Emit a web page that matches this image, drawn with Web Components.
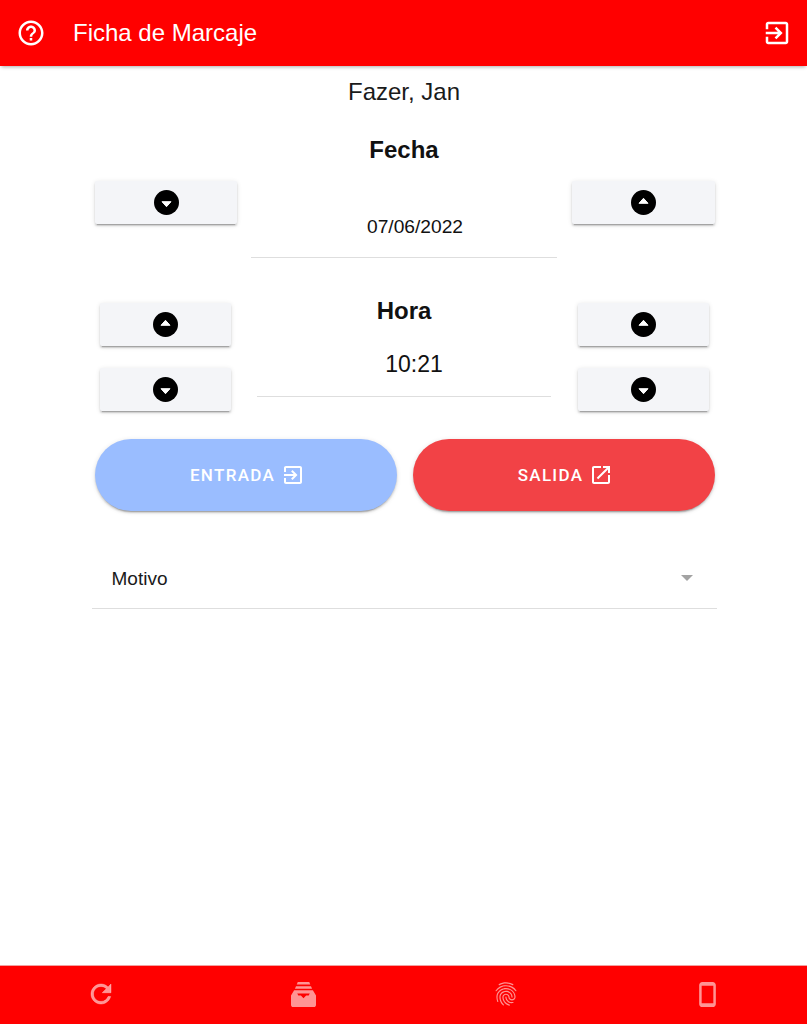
<!DOCTYPE html>
<html lang="es">
<head>
<meta charset="utf-8">
<title>Ficha de Marcaje</title>
<style>
    html, body { margin: 0; height: 100%; background: #fff; }
    body { font-family: "Liberation Sans", Arial, sans-serif; color: #111; }
</style>
</head>
<body>
<app-ficha></app-ficha>
<script>
const iconos = {
    ayuda: '<path d="M11 18h2v-2h-2v2zm1-16C6.48 2 2 6.48 2 12s4.48 10 10 10 10-4.48 10-10S17.52 2 12 2zm0 18c-4.41 0-8-3.59-8-8s3.59-8 8-8 8 3.59 8 8-3.59 8-8 8zm0-14c-2.21 0-4 1.79-4 4h2c0-1.1.9-2 2-2s2 .9 2 2c0 2-3 1.75-3 5h2c0-2.25 3-2.5 3-5 0-2.21-1.79-4-4-4z"/>',
    entrar: '<path d="M10.09 15.59L11.5 17l5-5-5-5-1.41 1.41L12.67 11H3v2h9.67l-2.58 2.59zM19 3H5c-1.11 0-2 .9-2 2v4h2V5h14v14H5v-4H3v4c0 1.1.89 2 2 2h14c1.1 0 2-.9 2-2V5c0-1.1-.9-2-2-2z"/>',
    salir: '<path d="M19 19H5V5h7V3H5c-1.11 0-2 .9-2 2v14c0 1.1.89 2 2 2h14c1.1 0 2-.9 2-2v-7h-2v7zM14 3v2h3.59l-9.83 9.83 1.41 1.41L19 6.41V10h2V3h-7z"/>',
    refrescar: '<path stroke="currentColor" stroke-width=".4" d="M17.65 6.35C16.2 4.9 14.21 4 12 4c-4.42 0-7.99 3.58-7.99 8s3.57 8 7.99 8c3.73 0 6.84-2.55 7.73-6h-2.08c-.82 2.33-3.04 4-5.65 4-3.31 0-6-2.69-6-6s2.69-6 6-6c1.66 0 3.14.69 4.22 1.78L13 11h7V4l-2.35 2.35z"/>',
    bandeja: '<path d="M6.500 0h11l1 2.500H5.500z"/><path d="M4.800 4h14.400l1 2.500H3.800z"/><path fill-rule="evenodd" d="M3 8h18l3 5v9c0 1.100-.9 2-2 2H2c-1.100 0-2-.9-2-2v-9zM6 11l1 2h2.500l2.500 2.500 2.500-2.500H17l1-2z"/>',
    huella: '<path d="M17.81 4.47c-.08 0-.16-.02-.23-.06C15.66 3.42 14 3 12.01 3c-1.98 0-3.86.47-5.57 1.41-.24.13-.54.04-.68-.2-.13-.24-.04-.55.2-.68C7.82 2.52 9.86 2 12.01 2c2.13 0 3.99.47 6.03 1.52.25.13.34.43.21.67-.09.18-.26.28-.44.28zM3.5 9.72c-.1 0-.2-.03-.29-.09-.23-.16-.28-.47-.12-.7.99-1.4 2.25-2.5 3.75-3.27C9.98 4.04 14 4.03 17.15 5.65c1.5.77 2.76 1.86 3.75 3.25.16.22.11.54-.12.7-.23.16-.54.11-.7-.12-.9-1.26-2.04-2.25-3.39-2.94-2.87-1.47-6.54-1.47-9.4.01-1.36.7-2.5 1.7-3.4 2.96-.08.14-.23.21-.39.21zm6.25 12.07c-.13 0-.26-.05-.35-.15-.87-.87-1.34-1.43-2.01-2.64-.69-1.23-1.05-2.73-1.05-4.34 0-2.97 2.54-5.39 5.66-5.39s5.66 2.42 5.66 5.39c0 .28-.22.5-.5.5s-.5-.22-.5-.5c0-2.42-2.09-4.39-4.66-4.39-2.57 0-4.66 1.97-4.66 4.39 0 1.44.32 2.77.93 3.85.64 1.15 1.08 1.64 1.85 2.42.19.2.19.51 0 .71-.11.1-.24.15-.37.15zm7.17-1.85c-1.19 0-2.24-.3-3.1-.89-1.49-1.01-2.38-2.65-2.38-4.39 0-.28.22-.5.5-.5s.5.22.5.5c0 1.41.72 2.74 1.94 3.56.71.48 1.54.71 2.54.71.24 0 .64-.03 1.04-.1.27-.05.53.13.58.41.05.27-.13.53-.41.58-.57.11-1.07.12-1.21.12zM14.91 22c-.04 0-.09-.01-.13-.02-1.59-.44-2.63-1.03-3.72-2.1-1.4-1.39-2.17-3.24-2.17-5.22 0-1.62 1.38-2.94 3.08-2.94 1.7 0 3.08 1.32 3.08 2.94 0 1.07.93 1.94 2.08 1.94s2.08-.87 2.08-1.94c0-3.77-3.25-6.83-7.25-6.83-2.84 0-5.44 1.58-6.61 4.03-.39.81-.59 1.76-.59 2.8 0 .78.07 2.01.67 3.61.1.26-.03.55-.29.64-.26.1-.55-.04-.64-.29-.49-1.31-.73-2.61-.73-3.96 0-1.2.23-2.29.68-3.24 1.33-2.79 4.28-4.6 7.51-4.6 4.55 0 8.25 3.51 8.25 7.83 0 1.62-1.38 2.94-3.08 2.94s-3.08-1.32-3.08-2.94c0-1.07-.93-1.94-2.08-1.94s-2.08.87-2.08 1.94c0 1.71.66 3.31 1.87 4.51.95.94 1.86 1.46 3.27 1.85.27.07.42.35.35.61-.05.23-.26.38-.47.38z"/>',
    movil: '<path fill-rule="evenodd" d="M7 0h10c1.700 0 3 1.300 3 3v18c0 1.700-1.300 3-3 3H7c-1.700 0-3-1.300-3-3V3c0-1.700 1.300-3 3-3zm-.6 3.600v16.800h11.200V3.600H6.400z"/>'
};

function svgIcono(nombre, tam) {
    return `<svg width="${tam}" height="${tam}" viewBox="0 0 24 24" fill="currentColor" aria-hidden="true">${iconos[nombre]}</svg>`;
}

class componenteBarra extends HTMLElement {
    constructor() {
        super();
        const shadowRoot = this.attachShadow({ mode: 'open' });
        shadowRoot.innerHTML = `
            <style>
                :host {
                    display: flex;
                    align-items: center;
                    height: 66px;
                    background: #ff0000;
                    color: #fff;
                    box-shadow: 0 2px 4px -1px rgba(0,0,0,.2), 0 3px 3px -2px rgba(0,0,0,.14);
                    position: relative;
                    flex: none;
                }
                .ayuda { display: flex; margin-left: 16px; }
                .titulo { margin-left: 27px; font-size: 24px; flex: 1; }
                .salir { display: flex; margin-right: 15px; }
            </style>
            <span class="ayuda">${svgIcono('ayuda', 30)}</span>
            <span class="titulo"><slot></slot></span>
            <span class="salir">${svgIcono('entrar', 30)}</span>
        `;
    }
}
customElements.define("app-barra", componenteBarra);

class componentePaso extends HTMLElement {
    constructor() {
        super();
        const shadowRoot = this.attachShadow({ mode: 'open' });
        const arriba = this.getAttribute('dir') === 'up';
        const triangulo = arriba ? 'M12.500 8.300 L17 13.300 H8 Z' : 'M8 11.700 H17 L12.500 16.700 Z';
        shadowRoot.innerHTML = `
            <style>
                :host {
                    display: flex;
                    align-items: center;
                    justify-content: center;
                    height: 43px;
                    background: #f4f5f8;
                    border-radius: 2px;
                    box-shadow: 0 3px 1px -2px rgba(0,0,0,.2), 0 2px 2px 0 rgba(0,0,0,.14), 0 1px 5px 0 rgba(0,0,0,.12);
                }
                svg { display: block; }
            </style>
            <svg width="25" height="25" viewBox="0 0 25 25" aria-hidden="true">
                <circle cx="12.500" cy="12.500" r="12.500" fill="#000"/>
                <path d="${triangulo}" fill="#fff" stroke="#fff" stroke-linejoin="round"/>
            </svg>
        `;
    }
}
customElements.define("app-paso", componentePaso);

class componenteCampo extends HTMLElement {
    constructor() {
        super();
        const shadowRoot = this.attachShadow({ mode: 'open' });
        shadowRoot.innerHTML = `
            <style>
                :host {
                    display: block;
                    border-bottom: 1px solid #dedede;
                    padding-left: 20px;
                    text-align: center;
                    box-sizing: border-box;
                }
            </style>
            <slot></slot>
        `;
    }
}
customElements.define("app-campo", componenteCampo);

class componenteBotonPill extends HTMLElement {
    constructor() {
        super();
        const shadowRoot = this.attachShadow({ mode: 'open' });
        const icono = this.getAttribute('icono');
        shadowRoot.innerHTML = `
            <style>
                :host {
                    display: flex;
                    align-items: center;
                    justify-content: center;
                    gap: 6px;
                    height: 72px;
                    padding-left: 3px;
                    border-radius: 36px;
                    color: #fff;
                    font-family: Roboto, sans-serif;
                    font-size: 17px;
                    font-weight: 500;
                    letter-spacing: 1.300px;
                    background: var(--fondo, #999);
                    box-shadow: 0 3px 1px -2px rgba(0,0,0,.2), 0 2px 2px 0 rgba(0,0,0,.14), 0 1px 5px 0 rgba(0,0,0,.12);
                }
                svg { display: block; }
            </style>
            <span><slot></slot></span>
            ${svgIcono(icono, 24)}
        `;
    }
}
customElements.define("app-boton-pill", componenteBotonPill);

class componenteSelector extends HTMLElement {
    constructor() {
        super();
        const shadowRoot = this.attachShadow({ mode: 'open' });
        shadowRoot.innerHTML = `
            <style>
                :host {
                    display: flex;
                    align-items: center;
                    justify-content: space-between;
                    height: 58px;
                    padding: 0 24px 0 20px;
                    border-bottom: 1px solid #dedede;
                    font-size: 19px;
                    color: #1a1a1a;
                }
                .flecha {
                    width: 0;
                    height: 0;
                    border-left: 6px solid transparent;
                    border-right: 6px solid transparent;
                    border-top: 6px solid #a3a3a3;
                    margin-bottom: 2px;
                }
            </style>
            <span><slot></slot></span>
            <span class="flecha"></span>
        `;
    }
}
customElements.define("app-selector", componenteSelector);

class componentePie extends HTMLElement {
    constructor() {
        super();
        const shadowRoot = this.attachShadow({ mode: 'open' });
        shadowRoot.innerHTML = `
            <style>
                :host {
                    display: grid;
                    grid-template-columns: 202px 202px 204px 199px;
                    height: 58px;
                    background: #ff0000;
                    border-top: 1px solid #f2a0a0;
                    color: rgba(255,255,255,.58);
                    flex: none;
                }
                span { display: flex; align-items: center; justify-content: center; padding-bottom: 2px; }
            </style>
            <span>${svgIcono('refrescar', 30)}</span>
            <span>${svgIcono('bandeja', 25)}</span>
            <span>${svgIcono('huella', 28)}</span>
            <span>${svgIcono('movil', 25)}</span>
        `;
    }
}
customElements.define("app-pie", componentePie);

class componenteFicha extends HTMLElement {
    constructor() {
        super();
        const shadowRoot = this.attachShadow({ mode: 'open' });
        shadowRoot.innerHTML = `
            <style>
                :host {
                    display: flex;
                    flex-direction: column;
                    height: 100vh;
                    font-family: "Liberation Sans", Arial, sans-serif;
                    color: #111;
                }
                main { flex: 1; display: flex; flex-direction: column; align-items: center; padding-left: 1px; }
                .nombre { font-size: 24px; line-height: 28px; margin-top: 12px; color: #1a1a1a; }
                .seccion { font-size: 24px; font-weight: bold; line-height: 28px; }
                .fecha-titulo { margin-top: 30px; }
                .fecha {
                    display: grid;
                    grid-template-columns: 142px 306px 144px;
                    column-gap: 14px;
                    margin: 17px 0 0 2px;
                    width: 620px;
                }
                .fecha app-paso:last-child { margin-left: 1px; }
                .fecha app-campo { font-size: 19.200px; line-height: 24px; padding: 34px 0 18px 22px; }
                .hora {
                    display: grid;
                    grid-template-columns: 131px 294px 131px;
                    column-gap: 26.500px;
                    grid-template-rows: 43px 43px;
                    row-gap: 22px;
                    margin-top: 45px;
                }
                .hora .centro { grid-column: 2; grid-row: 1 / span 2; text-align: center; }
                .hora .seccion { margin-top: -6px; }
                .hora app-campo { font-size: 23px; line-height: 30px; padding-top: 24px; padding-bottom: 17px; }
                .botones {
                    display: grid;
                    grid-template-columns: 302px 302px;
                    column-gap: 16px;
                    margin: 28px 0 0 2px;
                }
                .motivo { width: 625px; margin-top: 39px; }
            </style>
            <app-barra>Ficha de Marcaje</app-barra>
            <main>
                <div class="nombre">Fazer, Jan</div>
                <div class="seccion fecha-titulo">Fecha</div>
                <div class="fecha">
                    <app-paso dir="down"></app-paso>
                    <app-campo>07/06/2022</app-campo>
                    <app-paso dir="up"></app-paso>
                </div>
                <div class="hora">
                    <app-paso dir="up"></app-paso>
                    <div class="centro">
                        <div class="seccion">Hora</div>
                        <app-campo>10:21</app-campo>
                    </div>
                    <app-paso dir="up"></app-paso>
                    <app-paso dir="down"></app-paso>
                    <app-paso dir="down" style="grid-column: 3"></app-paso>
                </div>
                <div class="botones">
                    <app-boton-pill icono="entrar" style="--fondo:#9abdff">ENTRADA</app-boton-pill>
                    <app-boton-pill icono="salir" style="--fondo:#f24246">SALIDA</app-boton-pill>
                </div>
                <div class="motivo"><app-selector>Motivo</app-selector></div>
            </main>
            <app-pie></app-pie>
        `;
    }
}
customElements.define("app-ficha", componenteFicha);
</script>
</body>
</html>
